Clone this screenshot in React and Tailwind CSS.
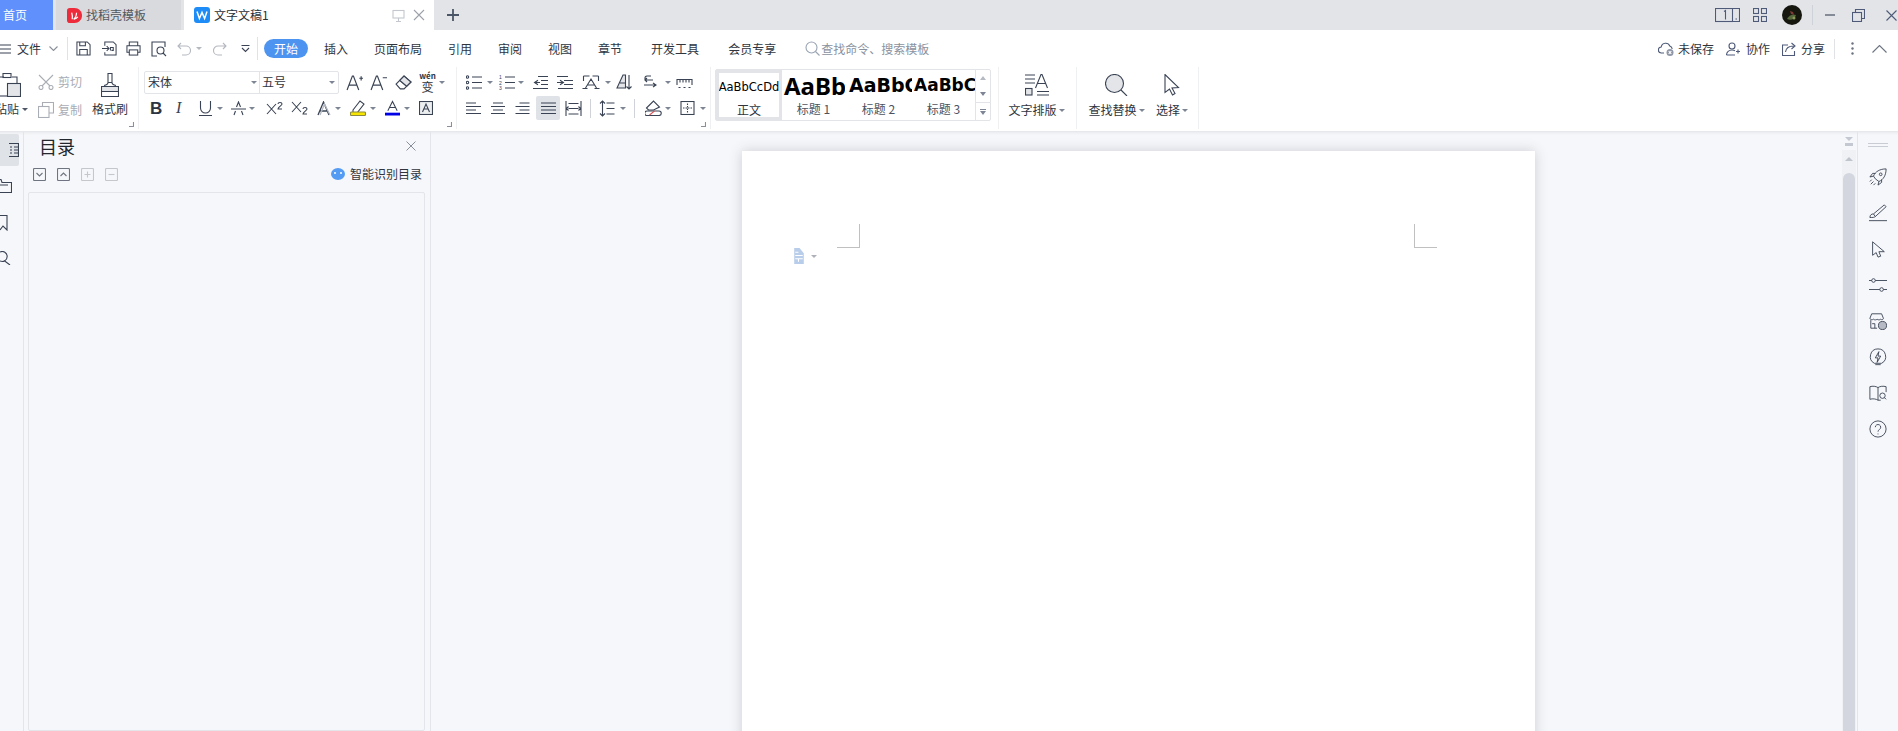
import React from "react";

const Ic = ({ c = "", vb = "0 0 16 16", sw = 1.1, children, color = "text-[#3a4354]" }) => (
  <svg viewBox={vb} fill="none" stroke="currentColor" strokeWidth={sw} className={`block shrink-0 ${color} ${c}`}>
    {children}
  </svg>
);
const Caret = ({ c = "", color = "border-t-[#7d8594]" }) => (
  <span className={`block shrink-0 w-0 h-0 border-x-[3px] border-x-transparent border-t-[3px] ${color} ${c}`} />
);
const Corner = () => (
  <Ic c="absolute right-[4px] bottom-[2px] w-[5px] h-[5px]" vb="0 0 5 5" color="text-[#8a8f99]">
    <path d="M0 4.5h4.5V0" />
  </Ic>
);
const Sep = () => <div className="w-px h-[62px] bg-[#eef0f2] shrink-0" />;
const Sep2 = ({ c = "" }) => <div className={`w-px bg-[#cfd2d8] shrink-0 ${c}`} />;
const MenuItem = ({ c, children }) => <span className={`shrink-0 ${c}`}>{children}</span>;

const TabBar = () => (
  <div className="flex h-[30px] bg-[#e2e4e8] items-stretch text-[12px] leading-[30px] text-[#3d4450]">
    <div className="w-[53px] bg-[#5f90fb] text-white pl-[3px] shrink-0">首页</div>
    <div className="w-[125px] ml-[3px] bg-[#d8dade] flex items-center shrink-0">
      <svg viewBox="0 0 16 16" className="block w-[15px] h-[15px] ml-[11px]">
        <path d="M0 3a3 3 0 0 1 3-3h5c4.5 0 8 3.6 8 8s-3.5 8-8 8H3a3 3 0 0 1-3-3z" fill="#ee2b3a" />
        <path d="M5 5c.6 2 1 4 .6 7M7 12c2.200-1.500 3-4 3.200-7M7.600 12c1.600-.4 3-1.200 3.900-2.500" stroke="#fff" strokeWidth="1.300" fill="none" />
      </svg>
      <span className="ml-[4px] text-[#53585f]">找稻壳模板</span>
    </div>
    <div className="w-[250px] ml-[3px] bg-white flex items-center shrink-0">
      <svg viewBox="0 0 16 16" className="block w-[16px] h-[16px] ml-[10px]">
        <rect width="16" height="16" rx="3" fill="#1e8cf7" />
        <path d="M3 4.500l2.400 7 2.600-6 2.600 6 2.400-7" stroke="#fff" strokeWidth="1.500" fill="none" />
      </svg>
      <span className="ml-[4px] text-[#2b2f36]">文字文稿1</span>
      <Ic c="w-[13px] h-[13px] ml-[123px]" vb="0 0 13 13" color="text-[#c4c8ce]">
        <rect x="1" y="1.500" width="11" height="7.500" />
        <path d="M6.500 9v3M4 12.500h5" />
      </Ic>
      <Ic c="w-[12px] h-[12px] ml-[8px]" vb="0 0 12 12" color="text-[#9da2aa]">
        <path d="M1 1l10 10M11 1L1 11" />
      </Ic>
    </div>
    <div className="w-[37px] flex items-center justify-center shrink-0">
      <Ic c="w-[12px] h-[12px]" vb="0 0 12 12" sw={1.800} color="text-[#4a5568]">
        <path d="M6 0v12M0 6h12" />
      </Ic>
    </div>
    <div className="flex-1" />
    <div className="flex items-center shrink-0 text-[#4e5a78]">
      <Ic c="w-[25px] h-[15px]" vb="0 0 25 15" color="text-[#4e5a78]">
        <rect x=".5" y=".5" width="17" height="13" />
        <path d="M17.500.5h7v13h-7M20.500 11h1.500" />
        <path d="M9 3.500l1.500-1v9" />
      </Ic>
      <Ic c="w-[14px] h-[14px] ml-[13px]" vb="0 0 14 14" color="text-[#4e5a78]">
        <rect x=".5" y=".5" width="5" height="5" />
        <rect x="8.500" y=".5" width="5" height="5" />
        <rect x=".5" y="8.500" width="5" height="5" />
        <rect x="8.500" y="8.500" width="5" height="5" />
      </Ic>
      <svg viewBox="0 0 20 20" className="block w-[20px] h-[20px] ml-[15px]">
        <circle cx="10" cy="10" r="10" fill="#15170f" />
        <path d="M5 14c2-4 5-5 9-4-1 4-5 6-9 4z" fill="#56693a" />
        <path d="M8 6l3 1 1 3-3-1z" fill="#7e3b36" />
        <circle cx="12" cy="13" r="1.500" fill="#8a9a5a" />
      </svg>
      <Sep2 c="h-[20px] ml-[10px]" />
      <Ic c="w-[10px] h-[10px] ml-[12px]" vb="0 0 10 10">
        <path d="M0 5h10" />
      </Ic>
      <Ic c="w-[13px] h-[13px] ml-[17px]" vb="0 0 13 13" color="text-[#4e5a78]">
        <rect x=".5" y="3.500" width="9" height="9" />
        <path d="M3.500 3.500V.5h9v9H9.500" />
      </Ic>
      <Ic c="w-[11px] h-[11px] ml-[21px] mr-[1px]" vb="0 0 11 11" color="text-[#4e5a78]">
        <path d="M.5.5l10 10M10.500.5l-10 10" />
      </Ic>
    </div>
  </div>
);

const MenuBar = () => (
  <div className="flex items-center h-[37px] bg-white text-[12px] text-[#30353d]">
    <Ic c="w-[11px] h-[10px]" vb="0 0 11 10"><path d="M0 1h11M0 5h11M0 9h11" /></Ic>
    <MenuItem c="ml-[6px]">文件</MenuItem>
    <Ic c="w-[9px] h-[5px] ml-[8px]" vb="0 0 9 5" color="text-[#8a909a]"><path d="M.5.5l4 4 4-4" /></Ic>
    <Sep2 c="h-[23px] ml-[9px] bg-[#e0e2e6]" />
    <Ic c="w-[15px] h-[15px] ml-[8px]">
      <path d="M1 1h11l3 3v11H1z" /><path d="M4 15V9h8v6M4 1v4h6V1" />
    </Ic>
    <Ic c="w-[15px] h-[15px] ml-[11px]">
      <path d="M3 5V1h9l3 3v11H3v-3" /><path d="M0 8h7M5 5.500L7.500 8 5 10.500" /><path d="M9 10V7h3v3h-2" />
    </Ic>
    <Ic c="w-[15px] h-[15px] ml-[9px]">
      <path d="M3.500 5V1h9v4M3.500 12H1V5h14v7h-2.500" /><rect x="3.500" y="9.500" width="9" height="5.500" />
    </Ic>
    <Ic c="w-[16px] h-[16px] ml-[10px]">
      <path d="M14 6V1H1v14h5" /><circle cx="9.500" cy="9.500" r="3.500" /><path d="M12 12l3 3" />
    </Ic>
    <Ic c="w-[14px] h-[14px] ml-[10px]" vb="0 0 14 14" color="text-[#b4b8c0]">
      <path d="M4 1L1 4l3 3M1 4h8a4.500 4.500 0 0 1 0 9H5" />
    </Ic>
    <Caret c="ml-[5px]" color="border-t-[#b4b8c0]" />
    <Ic c="w-[14px] h-[14px] ml-[11px]" vb="0 0 14 14" color="text-[#b4b8c0]">
      <path d="M10 1l3 3-3 3M13 4H5a4.500 4.500 0 0 0 0 9h4" />
    </Ic>
    <Ic c="w-[9px] h-[8px] ml-[14px]" vb="0 0 9 8"><path d="M.5.500h8M1 3l3.500 3.500L8 3" /></Ic>
    <Sep2 c="h-[23px] ml-[7px] bg-[#e0e2e6]" />
    <div className="ml-[6px] w-[44px] h-[19px] rounded-full bg-[#4d94f1] text-white text-center leading-[19px] shrink-0">开始</div>
    <MenuItem c="ml-[16px]">插入</MenuItem>
    <MenuItem c="ml-[26px]">页面布局</MenuItem>
    <MenuItem c="ml-[26px]">引用</MenuItem>
    <MenuItem c="ml-[26px]">审阅</MenuItem>
    <MenuItem c="ml-[26px]">视图</MenuItem>
    <MenuItem c="ml-[26px]">章节</MenuItem>
    <MenuItem c="ml-[29px]">开发工具</MenuItem>
    <MenuItem c="ml-[29px]">会员专享</MenuItem>
    <Ic c="w-[15px] h-[15px] ml-[29px]" vb="0 0 15 15" color="text-[#9aa4b2]">
      <circle cx="6.500" cy="6.500" r="5.500" /><path d="M10.500 10.500l4 4" />
    </Ic>
    <span className="ml-[1px] text-[#8a92a0] shrink-0">查找命令、搜索模板</span>
    <div className="flex-1" />
    <Ic c="w-[16px] h-[15px]" vb="0 0 16 15" color="text-[#4e5a78]">
      <path d="M6 12H3.500a3 3 0 0 1-.3-6 4.500 4.500 0 0 1 8.600-1 3.500 3.500 0 0 1 2.400 3" />
      <circle cx="12" cy="11.500" r="3.500" fill="#8f97a8" stroke="none" />
      <path d="M10.700 10.200l2.600 2.600M13.300 10.200l-2.600 2.600" stroke="#fff" />
    </Ic>
    <MenuItem c="ml-[4px]">未保存</MenuItem>
    <Ic c="w-[14px] h-[14px] ml-[12px]" vb="0 0 14 14" color="text-[#4e5a78]">
      <circle cx="6" cy="4" r="3" /><path d="M.5 13c0-3 2.500-5 5.500-5 1 0 2 .2 3 .8M.5 13H9M10 9.500h4M12 7.500v4" />
    </Ic>
    <MenuItem c="ml-[6px]">协作</MenuItem>
    <Ic c="w-[14px] h-[14px] ml-[12px]" vb="0 0 14 14" color="text-[#4e5a78]">
      <path d="M6 3H.5v10.500h12V9" /><path d="M3.500 10c.5-3.500 3.500-6 8-6M9.500 1l3.500 3-3.500 3" />
    </Ic>
    <MenuItem c="ml-[5px]">分享</MenuItem>
    <Sep2 c="h-[20px] ml-[9px] bg-[#e0e2e6]" />
    <Ic c="w-[3px] h-[13px] ml-[16px]" vb="0 0 3 13" color="text-[#6b7280]">
      <circle cx="1.500" cy="1.500" r="1.200" fill="currentColor" stroke="none" />
      <circle cx="1.500" cy="6.500" r="1.200" fill="currentColor" stroke="none" />
      <circle cx="1.500" cy="11.500" r="1.200" fill="currentColor" stroke="none" />
    </Ic>
    <Ic c="w-[15px] h-[8px] ml-[18px] mr-[11px]" vb="0 0 15 8" color="text-[#6b7280]"><path d="M.5 7.500l7-7 7 7" /></Ic>
  </div>
);

const Group1 = () => (
  <div className="relative w-[138px] shrink-0 h-[62px] text-[12px] text-[#30353d]">
    <div className="flex">
      <div className="w-[29px] shrink-0 overflow-visible">
        <Ic c="w-[21px] h-[24px] mt-[6px]" vb="0 0 21 24">
          <path d="M0 4h4M12 4h5v6" />
          <rect x="3" y=".5" width="8" height="4" />
          <path d="M0 23h7" />
          <rect x="7.500" y="10.500" width="13" height="13" fill="#e3e5e9" />
        </Ic>
        <div className="flex items-center mt-[3px] -ml-[5px] w-[34px]">
          <span className="shrink-0">粘贴</span>
          <Caret c="ml-[3px]" color="border-t-[#4f5663]" />
        </div>
      </div>
      <div className="w-[63px] shrink-0 ml-[9px] text-[#a9adb4]">
        <div className="flex items-center mt-[6px] h-[18px]">
          <Ic c="w-[16px] h-[16px]" color="text-[#a9adb4]">
            <path d="M1 1l11 11M15 1L4 12" /><circle cx="3" cy="13.500" r="2" /><circle cx="13" cy="13.500" r="2" />
          </Ic>
          <span className="ml-[4px]">剪切</span>
        </div>
        <div className="flex items-center mt-[10px] h-[18px]">
          <Ic c="w-[16px] h-[16px]" color="text-[#a9adb4]">
            <rect x=".5" y="4.500" width="10.500" height="11" /><path d="M4.500 4.500V.5h11v10.500H11" />
          </Ic>
          <span className="ml-[4px]">复制</span>
        </div>
      </div>
      <div className="w-[36px] shrink-0 -ml-[9px] flex flex-col items-center">
        <Ic c="w-[18px] h-[24px] mt-[6px]" vb="0 0 18 24">
          <path d="M7 .5h4v9H7zM7 9.500c0 2-1.500 2.500-4 3M11 9.500c0 2 1.500 2.500 4 3" />
          <path d="M.5 13.500h17v10H.5z" />
          <path d="M.5 13.500h17v5H.5z" fill="#e3e5e9" />
        </Ic>
        <span className="mt-[3px] whitespace-nowrap">格式刷</span>
      </div>
    </div>
    <Corner />
  </div>
);

const Group2 = () => (
  <div className="relative w-[317px] shrink-0 h-[62px] text-[12px] text-[#30353d] pl-[5px] pt-[3px]">
    <div className="flex items-center h-[24px]">
      <div className="flex h-[23px] w-[195px] border border-[#e2e4e8] rounded-[2px] shrink-0 items-center">
        <div className="w-[115px] h-full border-r border-[#e2e4e8] flex items-center pl-[3px]">
          <span className="flex-1">宋体</span><Caret c="mr-[2px]" />
        </div>
        <div className="flex-1 h-full flex items-center pl-[2px]">
          <span className="flex-1">五号</span><Caret c="mr-[3px]" />
        </div>
      </div>
      <Ic c="w-[17px] h-[17px] ml-[7px]"><path d="M1 15L6 2h1l5 13M3 10.500h7M12.500 4h3.500M14.250 2v4" /></Ic>
      <Ic c="w-[17px] h-[17px] ml-[7px]"><path d="M1 15L6 2h1l5 13M3 10.500h7M12 3.500h4" /></Ic>
      <Ic c="w-[17px] h-[15px] ml-[8px]" vb="0 0 16 14">
        <path d="M1 8.500L8.500 1 15 6.500 8.500 13H5z" /><path d="M4.500 5l6.500 5.500" />
        <path d="M4.500 5L8.500 1 15 6.500 11 10.500z" fill="#e3e5e9" />
      </Ic>
      <div className="ml-[7px] w-[17px] flex flex-col items-center shrink-0 text-[#30353d]">
        <span className="text-[8px] leading-[8px] font-bold">wén</span>
        <span className="text-[12px] leading-[13px]">变</span>
      </div>
      <Caret c="ml-[3px]" />
    </div>
    <div className="flex items-center h-[24px] mt-[2px]">
      <span className="ml-[6px] w-[14px] text-[17px] font-bold font-['Liberation_Sans'] text-[#2c3442] leading-none shrink-0">B</span>
      <span className="ml-[12px] w-[12px] text-[16px] italic font-['Liberation_Serif'] text-[#3a4354] leading-none shrink-0">I</span>
      <Ic c="w-[15px] h-[16px] ml-[10px]" vb="0 0 15 16"><path d="M2.500 1v7a5 5 0 0 0 10 0V1M1 15.500h13" /></Ic>
      <Caret c="ml-[4px]" />
      <Ic c="w-[15px] h-[15px] ml-[8px]" vb="0 0 15 15"><path d="M0 8h15M3 14l1.500-4M12 14l-1.500-4M5.500 6l2-5 2 5" /></Ic>
      <Caret c="ml-[3px]" />
      <Ic c="w-[17px] h-[14px] ml-[11px]" vb="0 0 17 14"><path d="M1 3l9 10M10 3L1 13" /><path d="M12 3c0-2 4-2 4 0 0 1.500-4 3-4 5h4" /></Ic>
      <Ic c="w-[17px] h-[14px] ml-[8px]" vb="0 0 17 14"><path d="M1 1l9 10M10 1L1 11" /><path d="M12 8c0-2 4-2 4 0 0 1.500-4 3-4 5h4" /></Ic>
      <Ic c="w-[16px] h-[15px] ml-[8px]" vb="0 0 16 15" sw={1.300}><path d="M2 14L7.500 1 13 14M4 10h7" /><path d="M4 14L8.500 3 14 14" stroke="#b5b9c1" /></Ic>
      <Caret c="ml-[3px]" />
      <Ic c="w-[16px] h-[16px] ml-[9px]">
        <path d="M3 10l7-9 4 3-7 9H3z" /><rect x=".5" y="12" width="15" height="3.500" rx="1" fill="#f7e500" stroke="#8c8a40" />
      </Ic>
      <Caret c="ml-[4px]" />
      <svg viewBox="0 0 16 16" className="block w-[15px] h-[16px] ml-[9px] shrink-0">
        <path d="M3 11L8 1l5 10M5 7.500h6" fill="none" stroke="#3a4354" strokeWidth="1.100" />
        <rect x="0" y="13" width="16" height="3" fill="#0000e6" />
      </svg>
      <Caret c="ml-[4px]" />
      <Ic c="w-[14px] h-[14px] ml-[9px]" vb="0 0 14 14">
        <rect x=".5" y=".5" width="13" height="13" fill="#eceef0" /><path d="M3.500 11L7 3l3.500 8M5 8h4" />
      </Ic>
    </div>
    <Corner />
  </div>
);

const ListIcon = ({ c = "", num }) => (
  <Ic c={`w-[16px] h-[15px] ${c}`} vb="0 0 16 15">
    {num ? (
      <g fontSize="5" fill="currentColor" stroke="none" fontFamily="Liberation Sans"><text x="0" y="4">1</text><text x="0" y="9.500">2</text><text x="0" y="15">3</text></g>
    ) : (
      <g><circle cx="1.500" cy="2" r="1.200" /><circle cx="1.500" cy="7.500" r="1.200" /><circle cx="1.500" cy="13" r="1.200" /></g>
    )}
    <path d="M6 2h10M6 7.500h10M6 13h10" />
  </Ic>
);

const Group3 = () => (
  <div className="relative w-[253px] shrink-0 h-[62px] pl-[9px] pt-[3px]">
    <div className="flex items-center h-[24px]">
      <ListIcon />
      <Caret c="ml-[5px]" />
      <ListIcon c="ml-[6px]" num />
      <Caret c="ml-[3px]" />
      <Ic c="w-[15px] h-[15px] ml-[9px]" vb="0 0 15 15"><path d="M5 1.500h10M8 5.500h7M8 9.500h7M0 13.500h15M5 5.200L1.500 7.500 5 9.800M1.500 7.500H7" /></Ic>
      <Ic c="w-[16px] h-[15px] ml-[9px]" vb="0 0 16 15"><path d="M0 1.500h11M7 5.500h9M7 9.500h9M1 13.500h15M3 5.200l3.500 2.300L3 9.800M6.500 7.500H0" /></Ic>
      <Ic c="w-[18px] h-[15px] ml-[9px]" vb="0 0 17 15"><path d="M1 1h6M1 1v5M16 1h-6M16 1v5M3 13L8.500 4 14 13M5 10h7M0 13.500h5M12 13.500h5" /></Ic>
      <Caret c="ml-[5px]" />
      <Ic c="w-[16px] h-[16px] ml-[5px]"><path d="M1 14L7 1h2.500v13zM4 9h5.500" fill="#e3e5e9" /><path d="M13 1v14M10.500 12.500l2.500 2.500 2.500-2.500" /></Ic>
      <Ic c="w-[16px] h-[15px] ml-[12px]" vb="0 0 16 15"><path d="M7 1H3a2 2 0 0 0-2 2v2h8M3 3L1 5l2 2M0 10h11M9 8l3 2-3 2" /></Ic>
      <Caret c="ml-[5px]" />
      <Ic c="w-[17px] h-[11px] ml-[5px]" vb="0 0 16 11"><path d="M.5 8V2.500h15V8M3.500 2.500v3M6.500 2.500v3M9.500 2.500v3M12.500 2.500v3M2 10.500h2M7 10.500h2M12 10.500h2" /></Ic>
    </div>
    <div className="flex items-center h-[24px] mt-[2px]">
      <Ic c="w-[15px] h-[13px]" vb="0 0 15 13"><path d="M0 1h10M0 4.500h15M0 8h10M0 11.500h15" /></Ic>
      <Ic c="w-[14px] h-[13px] ml-[10px]" vb="0 0 14 13"><path d="M2 1h10M0 4.500h14M2 8h10M0 11.500h14" /></Ic>
      <Ic c="w-[15px] h-[13px] ml-[10px]" vb="0 0 14 13"><path d="M4 1h10M0 4.500h14M4 8h10M0 11.500h14" /></Ic>
      <div className="ml-[6px] w-[24px] h-[24px] bg-[#dfe2e6] rounded-[2px] flex items-center justify-center shrink-0">
        <Ic c="w-[15px] h-[13px]" vb="0 0 15 13"><path d="M0 1h15M0 4.500h15M0 8h15M0 11.500h15" /></Ic>
      </div>
      <Ic c="w-[17px] h-[15px] ml-[5px]" vb="0 0 16 15"><path d="M.5 0v15M15.500 0v15M3 2.500h10M3 13h10M3 7.500h10M3 5.500L1 7.500l2 2M13 5.500l2 2-2 2" /></Ic>
      <Sep2 c="h-[19px] ml-[8px]" />
      <Ic c="w-[16px] h-[17px] ml-[8px]" vb="0 0 15 17"><path d="M3 1v15M.5 3.500L3 1l2.500 2.500M.5 13.500L3 16l2.500-2.500M7 3h8M7 8.500h8M7 14h8" /></Ic>
      <Caret c="ml-[5px]" />
      <Sep2 c="h-[19px] ml-[8px]" />
      <Ic c="w-[17px] h-[16px] ml-[10px]">
        <path d="M1 8l7-7 6 6-6 3H3z" /><path d="M1.500 11h12a1.500 1.500 0 0 1 0 4.500h-12a1.500 1.500 0 0 1 0-4.500z" /><path d="M4 15l5-4" stroke="#e05050" />
      </Ic>
      <Caret c="ml-[3px]" />
      <Ic c="w-[15px] h-[14px] ml-[9px]" vb="0 0 14 14"><rect x=".5" y=".5" width="13" height="13" /><path d="M7 2.500v9M2.500 7h9" strokeDasharray="1.500 1" /></Ic>
      <Caret c="ml-[5px]" />
    </div>
    <Corner />
  </div>
);

const StyleCell = ({ label, w, children, active }) => (
  <div className={`${w} shrink-0 flex flex-col items-center overflow-hidden h-full ${active ? "border-[3px] border-[#e2e4e8]" : ""}`}>
    <div className={`w-full h-[31px] flex items-center whitespace-nowrap overflow-hidden ${active ? "justify-center" : "pl-[2px]"}`}>{children}</div>
    <span className="text-[12px] leading-[15px] text-[#4c5360]">{label}</span>
  </div>
);

const Group4 = () => (
  <div className="w-[287px] shrink-0 h-[62px] pl-[4px] pt-[2px]">
    <div className="flex w-[276px] h-[52px] border border-[#e2e4e8] rounded-[2px] text-black">
      <StyleCell active w="w-[66px]" label={<span className="text-[#30353d]">正文</span>}>
        <span className="text-[11.500px] font-['DejaVu_Sans']">AaBbCcDd</span>
      </StyleCell>
      <StyleCell w="w-[63px]" label="标题 1">
        <span className="text-[24px] font-bold font-['Noto_Sans']">AaBb</span>
      </StyleCell>
      <StyleCell w="w-[67px]" label="标题 2">
        <span className="text-[19px] font-bold font-['DejaVu_Sans'] ml-[2px]">AaBbC</span>
      </StyleCell>
      <StyleCell w="w-[63px]" label="标题 3">
        <span className="text-[17px] font-bold font-['DejaVu_Sans']">AaBbCc</span>
      </StyleCell>
      <div className="flex-1 flex flex-col items-center border-l border-[#e2e4e8]">
        <div className="h-[16px] flex items-center"><span className="block w-0 h-0 border-x-[3px] border-x-transparent border-b-[4px] border-b-[#b5b9c2]" /></div>
        <div className="h-[16px] flex items-center"><Caret c="border-t-[4px]" /></div>
        <div className="h-[18px] w-full flex flex-col items-center justify-center border-t border-[#e2e4e8]">
          <span className="block w-[6px] h-px bg-[#7d8594] mb-[1px]" />
          <Caret c="border-t-[4px]" />
        </div>
      </div>
    </div>
  </div>
);

const BigLabel = ({ children }) => (
  <div className="flex items-center justify-center text-[12px] text-[#30353d] mt-[5px]">
    <span className="whitespace-nowrap">{children}</span><Caret c="ml-[2px]" />
  </div>
);

const RibbonRight = () => (
  <>
    <Sep />
    <div className="w-[77px] shrink-0 flex flex-col items-center pt-[7px] pr-[2px]">
      <Ic c="w-[24px] h-[22px]" vb="0 0 24 22">
        <path d="M0 1h10M0 5h10M0 9h10M10.500 14L16 .5h1L22.500 14M12.500 9.500h8M12 17.500h12M12 21h12" />
        <rect x=".5" y="14.500" width="6.500" height="6.500" fill="#e3e5e9" />
      </Ic>
      <BigLabel>文字排版</BigLabel>
    </div>
    <Sep />
    <div className="w-[121px] shrink-0 flex pl-[9px]">
      <div className="w-[61px] flex flex-col items-center pt-[7px] shrink-0">
        <Ic c="w-[23px] h-[22px]" vb="0 0 23 22">
          <circle cx="9.500" cy="9.500" r="9" fill="#e3e5e9" /><path d="M16 16l6 6" />
        </Ic>
        <BigLabel>查找替换</BigLabel>
      </div>
      <div className="w-[38px] ml-[6px] flex flex-col items-center pt-[7px] shrink-0">
        <Ic c="w-[16px] h-[22px]" vb="0 0 16 22">
          <path d="M1 .5v18l4.500-3.500 3 6 2.500-1.500-3-5.500 6.500-.5z" />
        </Ic>
        <BigLabel>选择</BigLabel>
      </div>
    </div>
    <Sep />
  </>
);

const Ribbon = () => (
  <div className="flex h-[65px] bg-white pb-[2px] items-start border-b border-[#e6e8eb]">
    <Group1 />
    <Sep />
    <Group2 />
    <Sep />
    <Group3 />
    <Sep />
    <Group4 />
    <RibbonRight />
  </div>
);

const SmBtn = ({ dim, children, c = "" }) => (
  <Ic c={`w-[13px] h-[13px] ${c}`} vb="0 0 13 13" color={dim ? "text-[#c4c7cc]" : "text-[#6f7580]"}>
    <rect x=".5" y=".5" width="12" height="12" rx="1" />
    {children}
  </Ic>
);

const LeftRail = () => (
  <div className="w-[24px] shrink-0 border-r border-[#e3e5ea] pt-[2px] overflow-hidden">
    <div className="w-[19px] h-[32px] bg-[#dfe2e7] rounded-r-[2px] flex items-center justify-end pr-[0px]">
      <Ic c="w-[10px] h-[14px]" vb="0 0 10 14"><path d="M0 .5h9.500v13H0M1 4h2M1 7h2M1 10h2M5 4h4M5 7h4M5 10h4" /></Ic>
    </div>
    <Ic c="w-[16px] h-[14px] mt-[13px] -ml-[4px]" vb="0 0 16 14"><path d="M0 .5h5l1 3h9.500v10H2V6h10" /></Ic>
    <Ic c="w-[8px] h-[16px] mt-[22px]" vb="0 0 8 16"><path d="M0 .5h7v14.500L3 11l-3 4" /></Ic>
    <Ic c="w-[11px] h-[14px] mt-[20px]" vb="0 0 11 14"><path d="M0 1a5 5 0 1 1 0 9M4 9.500l6 4.500" /></Ic>
  </div>
);

const TocPanel = () => (
  <div className="w-[407px] shrink-0 border-r border-[#e3e5ea] flex flex-col px-[3px]">
    <div className="flex items-center h-[26px] mt-[1px]">
      <span className="text-[18px] leading-[26px] ml-[12px] text-[#23272e]">目录</span>
      <div className="flex-1" />
      <Ic c="w-[10px] h-[10px] mr-[11px]" vb="0 0 10 10" color="text-[#7d838e]" sw={0.900}><path d="M.5.5l9 9M9.500.5l-9 9" /></Ic>
    </div>
    <div className="flex items-center h-[18px] mt-[6px]">
      <SmBtn c="ml-[6px]"><path d="M3.500 5l3 3 3-3" /></SmBtn>
      <SmBtn c="ml-[11px]"><path d="M3.500 8l3-3 3 3" /></SmBtn>
      <SmBtn dim c="ml-[11px]"><path d="M3.500 6.500h6M6.500 3.500v6" /></SmBtn>
      <SmBtn dim c="ml-[11px]"><path d="M3.500 6.500h6" /></SmBtn>
      <div className="flex-1" />
      <svg viewBox="0 0 14 12" className="block w-[14px] h-[12px] shrink-0">
        <ellipse cx="7" cy="6" rx="7" ry="6" fill="#549cf3" />
        <circle cx="4" cy="5" r="1" fill="#fff" /><circle cx="10" cy="5" r="1" fill="#fff" />
      </svg>
      <span className="ml-[5px] text-[12px] text-[#30353d] mr-[5px]">智能识别目录</span>
    </div>
    <div className="flex-1 mt-[9px] ml-[1px] mr-[2px] border border-[#e3e5ea] rounded-[2px]" />
  </div>
);

const RAIL_CLS = "w-[18px] h-[18px] shrink-0";
const RightRail = () => (
  <div className="w-[41px] shrink-0 border-l border-[#e3e5ea] flex flex-col items-center pt-[11px]">
    <div className="w-[20px] h-[4px] border-y border-[#c9ccd2] shrink-0" />
    <div className="flex flex-col items-center gap-[18px] mt-[21px] ml-[-1px]">
      <Ic c={RAIL_CLS} vb="0 0 20 20" sw={1}><path d="M7 12L5 9c2-5 7-8 14-8 0 7-3 12-8 14zM5 9l-4 1 3-4h3M11 15l-1 4 4-3v-3M3 13l-2 2M5 15l-3 3M7 17l-2 2" /><circle cx="13" cy="7" r="1.500" /></Ic>
      <Ic c={RAIL_CLS} vb="0 0 20 20" sw={1}><path d="M1 15c0-3 2-4 4-4l2 3c-1 1-3 1-6 1zM5 11L17 1l2 2L7 14M0 18.500h20" /></Ic>
      <Ic c={RAIL_CLS} vb="0 0 20 20" sw={1}><path d="M4 2v15l4-3 2 5 3-1-2-5h6z" /></Ic>
      <Ic c={RAIL_CLS} vb="0 0 20 20" sw={1}><path d="M0 5h3M7 5h13M0 15h12M16 15h4" /><circle cx="5" cy="5" r="2" /><circle cx="14" cy="15" r="2" /></Ic>
      <Ic c={RAIL_CLS} vb="0 0 20 20" sw={1}><path d="M1 7l2-5h11l2 5c0 1.500-2 2-3 1-1 1-3 1-4 0-1 1-3 1-4 0-1 1-4 .5-4-1zM2 9v9h7" /><circle cx="15" cy="15" r="4.500" fill="#b5bac4" /><path d="M3.500 13h3v5" /></Ic>
      <Ic c={RAIL_CLS} vb="0 0 20 20" sw={1}><path d="M7 18.500h6M10 1a8.500 8.500 0 0 0-4 16h8a8.500 8.500 0 0 0-4-16z" /><path d="M11 4l-4 7h3l-1 5 4-7h-3z" /></Ic>
      <Ic c={RAIL_CLS} vb="0 0 20 20" sw={1}><path d="M10 4C8 2.500 4 2 1 3v14c3-1 7-.5 9 1zM10 4c2-1.500 6-2 9-1v6M10 18h3" /><circle cx="15" cy="13" r="3" /><path d="M17 15l2 2" /></Ic>
      <Ic c={RAIL_CLS} vb="0 0 20 20" sw={1}><circle cx="10" cy="10" r="9" /><path d="M7 8a3 3 0 1 1 4.500 2.600C10.500 11.200 10 12 10 13M10 15v1" /></Ic>
    </div>
  </div>
);

const Scrollbar = () => (
  <div className="w-[14px] shrink-0 flex flex-col items-center mr-[1px]">
    <Ic c="w-[8px] h-[9px] mt-[5px]" vb="0 0 8 9" color="text-[#c4c8d0]">
      <path d="M0 0h8L4 4z" fill="currentColor" stroke="none" /><path d="M0 6h8v3H0z" fill="currentColor" stroke="none" />
    </Ic>
    <div className="flex-1 w-full bg-[#f0f1f4] mt-[4px] flex flex-col items-center">
      <span className="block w-0 h-0 mt-[7px] border-x-[4px] border-x-transparent border-b-[4px] border-b-[#c0c4cd]" />
      <div className="flex-1 w-[12px] mt-[12px] rounded-t-[6px] bg-[#d3d6df]" />
    </div>
  </div>
);

const Mark = ({ right }) => (
  <div className={`w-[23px] h-[24px] border-b border-[#c0c0c0] shrink-0 ${right ? "border-l" : "border-r"}`} />
);

const DocArea = () => (
  <div className="flex-1 flex justify-start pt-[19px] pl-[311px] overflow-hidden min-w-0">
    <div className="w-[793px] shrink-0 bg-white shadow-[0_0_12px_rgba(60,65,80,0.22)] pt-[73px] h-[700px]">
      <div className="flex pl-[95px] pr-[98px] justify-between">
        <Mark />
        <Mark right />
      </div>
      <div className="flex items-center pl-[51px]">
        <svg viewBox="0 0 9 15" className="block w-[12px] h-[16px] shrink-0">
          <path d="M0 0h5l4 5v10H0z" fill="#b8cdea" />
          <path d="M1 4h3M1 7h7M1 10h7M4 10v3" stroke="#fff" strokeWidth="1" />
        </svg>
        <Caret c="ml-[6px]" color="border-t-[#aeb2b8]" />
      </div>
    </div>
  </div>
);

export default function App() {
  return (
    <div className="w-[1898px] h-[731px] overflow-hidden flex flex-col bg-white font-['Noto_Sans_CJK_SC','Noto_Sans',sans-serif]">
      <TabBar />
      <MenuBar />
      <Ribbon />
      <div className="flex-1 flex min-h-0 bg-[#f6f7fa] shadow-[inset_0_3px_3px_-2px_rgba(0,0,0,0.06)]">
        <LeftRail />
        <TocPanel />
        <DocArea />
        <Scrollbar />
        <RightRail />
      </div>
    </div>
  );
}
